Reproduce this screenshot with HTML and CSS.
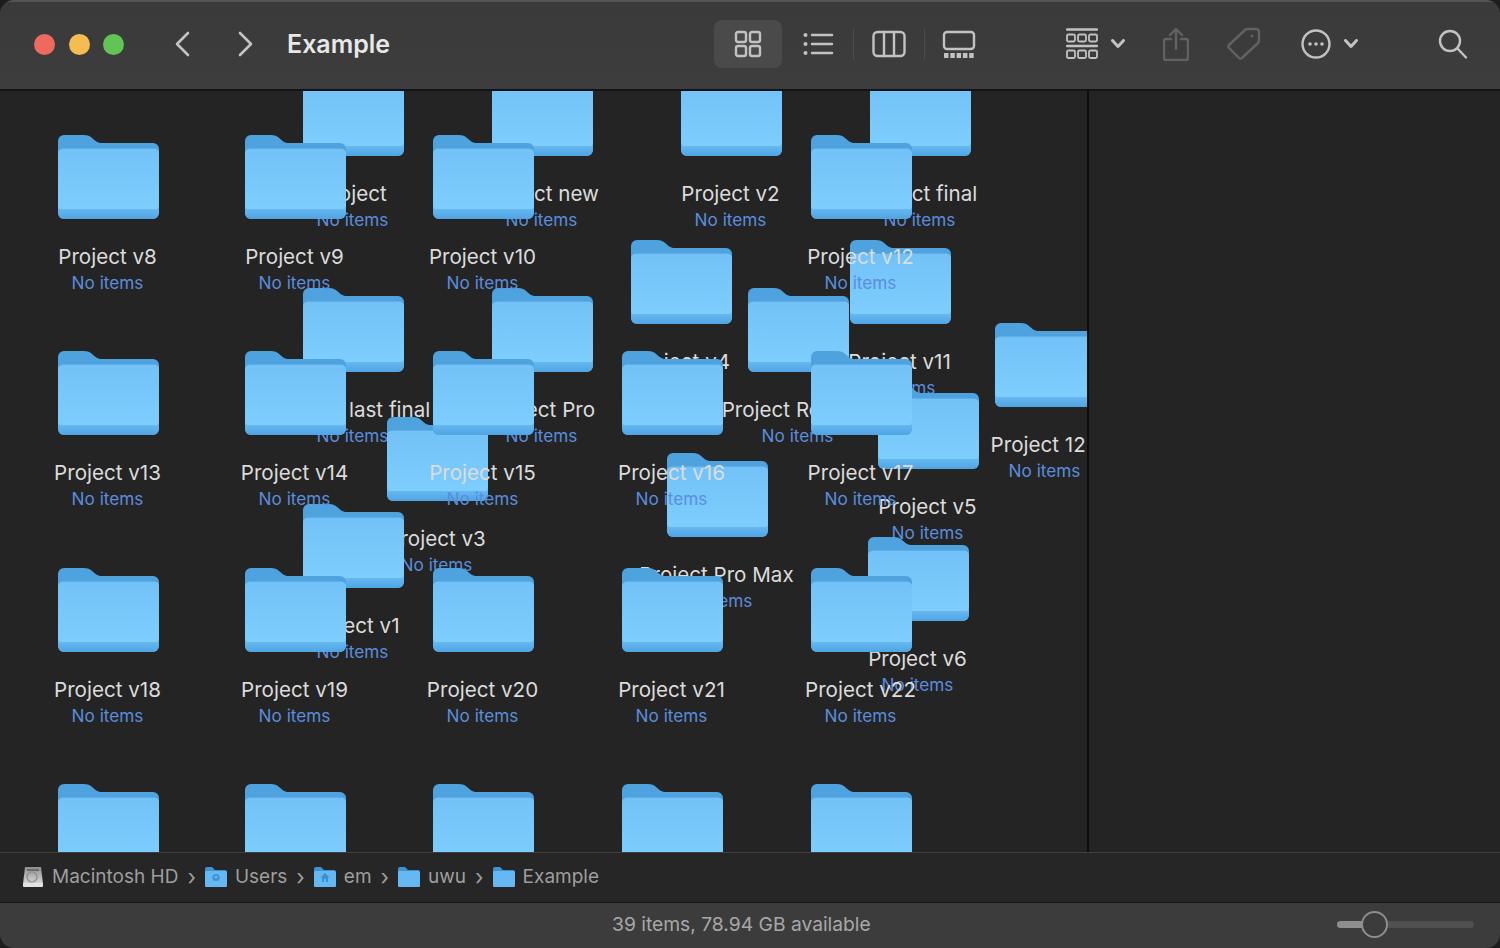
FILE: index.html
```html
<!DOCTYPE html>
<html lang="en">
<head>
    <meta charset="UTF-8">
    <meta name="viewport" content="width=device-width, initial-scale=1.0">
    <title>Example</title>
    <link rel="stylesheet" href="styles.css">
</head>
<body>
    <svg class="defs" width="0" height="0">
        <defs>
            <linearGradient id="folder-front" x1="0" y1="0" x2="0" y2="1">
                <stop offset="0" stop-color="#72c2f8"/>
                <stop offset="1" stop-color="#7dcdfd"/>
            </linearGradient>
            <linearGradient id="folder-band" x1="0" y1="0" x2="0" y2="1">
                <stop offset="0.800" stop-color="#70bff6"/>
                <stop offset="0.900" stop-color="#5fb2ec"/>
                <stop offset="1" stop-color="#4fa4e2"/>
            </linearGradient>
        </defs>
        <symbol id="folder" viewBox="0 0 102 85" preserveAspectRatio="none">
            <path fill="#4ea2de" d="M0 6a6 6 0 0 1 6-6h20c4 0 6 1 9 3.500l3 2.500c2 1.500 4 2 6 2h52a6 6 0 0 1 6 6v64a7 7 0 0 1-7 7H6a6 6 0 0 1-6-6z"/>
            <path fill="url(#folder-band)" d="M0 19a5 5 0 0 1 5-5h92a5 5 0 0 1 5 5v60a6 6 0 0 1-6 6H6a6 6 0 0 1-6-6z"/>
            <path fill="url(#folder-front)" d="M0 19a5 5 0 0 1 5-5h92a5 5 0 0 1 5 5v52a4 4 0 0 1-4 4H4a4 4 0 0 1-4-4z"/>
        </symbol>
        <symbol id="crumb" viewBox="0 0 22 20">
            <path fill="#3f93d2" d="M0 2a2 2 0 0 1 2-2h5l3 3h10a2 2 0 0 1 2 2v13a2 2 0 0 1-2 2H2a2 2 0 0 1-2-2z"/>
            <rect fill="#66b8f2" y="4" width="22" height="16" rx="1.500"/>
        </symbol>
    </svg>

    <div class="window">
        <header class="toolbar">
            <div class="lights">
                <span class="light red"></span>
                <span class="light yellow"></span>
                <span class="light green"></span>
            </div>
            <svg class="nav back" width="16" height="26" viewBox="0 0 16 26"><path d="M14 2 3 13l11 11"/></svg>
            <svg class="nav forward" width="16" height="26" viewBox="0 0 16 26"><path d="m2 2 11 11L2 24"/></svg>
            <div class="title">Example</div>

            <div class="view-active">
                <svg class="icon" width="28" height="28" viewBox="0 0 28 28">
                    <rect x="2" y="2" width="10" height="10" rx="2"/><rect x="16" y="2" width="10" height="10" rx="2"/>
                    <rect x="2" y="16" width="10" height="10" rx="2"/><rect x="16" y="16" width="10" height="10" rx="2"/>
                </svg>
            </div>
            <svg class="icon list-icon" width="32" height="26" viewBox="0 0 32 26">
                <path d="M9 4h20M9 13h20M9 22h20"/>
                <circle class="solid" cx="2.500" cy="4" r="2"/><circle class="solid" cx="2.500" cy="13" r="2"/><circle class="solid" cx="2.500" cy="22" r="2"/>
            </svg>
            <span class="sep sep-a"></span>
            <svg class="icon columns-icon" width="34" height="28" viewBox="0 0 34 28">
                <rect x="1.500" y="2" width="31" height="24" rx="4"/><path d="M12 2v24M22 2v24"/>
            </svg>
            <span class="sep sep-b"></span>
            <svg class="icon gallery-icon" width="34" height="28" viewBox="0 0 34 28">
                <rect x="2" y="2" width="30" height="17" rx="3"/>
                <path class="dashes" d="M2 25.500h30"/>
            </svg>

            <svg class="icon group-icon" width="32" height="32" viewBox="0 0 32 32">
                <path d="M1 1.500h30M1 18h30"/>
                <rect class="thin" x="1" y="6.500" width="8" height="7" rx="1.500"/><rect class="thin" x="12" y="6.500" width="8" height="7" rx="1.500"/><rect class="thin" x="23" y="6.500" width="8" height="7" rx="1.500"/>
                <rect class="thin" x="1" y="22.500" width="8" height="7.500" rx="1.500"/><rect class="thin" x="12" y="22.500" width="8" height="7.500" rx="1.500"/><rect class="thin" x="23" y="22.500" width="8" height="7.500" rx="1.500"/>
            </svg>
            <svg class="icon caret caret-a" width="14" height="10" viewBox="0 0 14 10"><path d="m1.500 1.500 5.500 6 5.500-6"/></svg>
            <svg class="icon dim share-icon" width="26" height="34" viewBox="0 0 26 34">
                <path d="M8 12H3a2 2 0 0 0-2 2v17a2 2 0 0 0 2 2h20a2 2 0 0 0 2-2V14a2 2 0 0 0-2-2h-5M13 22V2M7 8l6-6 6 6"/>
            </svg>
            <svg class="icon dim tag-icon" width="34" height="34" viewBox="0 0 34 34">
                <path d="M21 2h8a3 3 0 0 1 3 3v8a4 4 0 0 1-1 3L15 31a2 2 0 0 1-3 0L2 21a2 2 0 0 1 0-3L18 3a4 4 0 0 1 3-1z"/>
                <circle class="solid" cx="25" cy="9" r="1.500"/>
            </svg>
            <svg class="icon more-icon" width="30" height="30" viewBox="0 0 30 30">
                <circle cx="15" cy="15" r="13.500"/>
                <circle class="solid" cx="9" cy="15" r="1.800"/><circle class="solid" cx="15" cy="15" r="1.800"/><circle class="solid" cx="21" cy="15" r="1.800"/>
            </svg>
            <svg class="icon caret caret-b" width="14" height="10" viewBox="0 0 14 10"><path d="m1.500 1.500 5.500 6 5.500-6"/></svg>
            <svg class="icon search-icon" width="30" height="30" viewBox="0 0 30 30">
                <circle cx="12" cy="12" r="10"/><path d="m19.500 19.500 8.500 9"/>
            </svg>
        </header>

        <main class="main">
            <section class="canvas">
                <div class="item loose" style="left:259px;top:-19px"><svg class="folder"><use href="#folder"/></svg><div class="name">Project</div><div class="sub">No items</div></div>
                <div class="item loose" style="left:448px;top:-19px"><svg class="folder"><use href="#folder"/></svg><div class="name">Project new</div><div class="sub">No items</div></div>
                <div class="item loose" style="left:637px;top:-19px"><svg class="folder"><use href="#folder"/></svg><div class="name">Project v2</div><div class="sub">No items</div></div>
                <div class="item loose" style="left:826px;top:-19px"><svg class="folder"><use href="#folder"/></svg><div class="name">Project final</div><div class="sub">No items</div></div>
                <div class="item loose" style="left:587px;top:149px"><svg class="folder"><use href="#folder"/></svg><div class="name">Project v4</div><div class="sub">No items</div></div>
                <div class="item loose" style="left:806px;top:149px"><svg class="folder"><use href="#folder"/></svg><div class="name">Project v11</div><div class="sub">No items</div></div>
                <div class="item loose" style="left:259px;top:197px"><svg class="folder"><use href="#folder"/></svg><div class="name">Project last final</div><div class="sub">No items</div></div>
                <div class="item loose" style="left:448px;top:197px"><svg class="folder"><use href="#folder"/></svg><div class="name">Project Pro</div><div class="sub">No items</div></div>
                <div class="item loose" style="left:704px;top:197px"><svg class="folder"><use href="#folder"/></svg><div class="name">Project Remake</div><div class="sub">No items</div></div>
                <div class="item loose" style="left:951px;top:232px"><svg class="folder"><use href="#folder"/></svg><div class="name">Project 123</div><div class="sub">No items</div></div>
                <div class="item loose" style="left:834px;top:294px"><svg class="folder"><use href="#folder"/></svg><div class="name">Project v5</div><div class="sub">No items</div></div>
                <div class="item loose" style="left:343px;top:326px"><svg class="folder"><use href="#folder"/></svg><div class="name">Project v3</div><div class="sub">No items</div></div>
                <div class="item loose" style="left:623px;top:362px"><svg class="folder"><use href="#folder"/></svg><div class="name">Project Pro Max</div><div class="sub">No items</div></div>
                <div class="item loose" style="left:259px;top:413px"><svg class="folder"><use href="#folder"/></svg><div class="name">Project v1</div><div class="sub">No items</div></div>
                <div class="item loose" style="left:824px;top:446px"><svg class="folder"><use href="#folder"/></svg><div class="name">Project v6</div><div class="sub">No items</div></div>

                <div class="grid">
                    <div class="item"><svg class="folder"><use href="#folder"/></svg><div class="name">Project v8</div><div class="sub">No items</div></div>
                    <div class="item"><svg class="folder"><use href="#folder"/></svg><div class="name">Project v9</div><div class="sub">No items</div></div>
                    <div class="item"><svg class="folder"><use href="#folder"/></svg><div class="name">Project v10</div><div class="sub">No items</div></div>
                    <div class="item"></div>
                    <div class="item"><svg class="folder"><use href="#folder"/></svg><div class="name">Project v12</div><div class="sub">No items</div></div>
                    <div class="item"><svg class="folder"><use href="#folder"/></svg><div class="name">Project v13</div><div class="sub">No items</div></div>
                    <div class="item"><svg class="folder"><use href="#folder"/></svg><div class="name">Project v14</div><div class="sub">No items</div></div>
                    <div class="item"><svg class="folder"><use href="#folder"/></svg><div class="name">Project v15</div><div class="sub">No items</div></div>
                    <div class="item"><svg class="folder"><use href="#folder"/></svg><div class="name">Project v16</div><div class="sub">No items</div></div>
                    <div class="item"><svg class="folder"><use href="#folder"/></svg><div class="name">Project v17</div><div class="sub">No items</div></div>
                    <div class="item"><svg class="folder"><use href="#folder"/></svg><div class="name">Project v18</div><div class="sub">No items</div></div>
                    <div class="item"><svg class="folder"><use href="#folder"/></svg><div class="name">Project v19</div><div class="sub">No items</div></div>
                    <div class="item"><svg class="folder"><use href="#folder"/></svg><div class="name">Project v20</div><div class="sub">No items</div></div>
                    <div class="item"><svg class="folder"><use href="#folder"/></svg><div class="name">Project v21</div><div class="sub">No items</div></div>
                    <div class="item"><svg class="folder"><use href="#folder"/></svg><div class="name">Project v22</div><div class="sub">No items</div></div>
                    <div class="item"><svg class="folder"><use href="#folder"/></svg></div>
                    <div class="item"><svg class="folder"><use href="#folder"/></svg></div>
                    <div class="item"><svg class="folder"><use href="#folder"/></svg></div>
                    <div class="item"><svg class="folder"><use href="#folder"/></svg></div>
                    <div class="item"><svg class="folder"><use href="#folder"/></svg></div>
                </div>
            </section>
            <aside class="preview"></aside>
        </main>

        <nav class="pathbar">
            <svg class="hd" width="22" height="22" viewBox="0 0 22 22">
                <defs>
                    <linearGradient id="hd-body" x1="0" y1="0" x2="0" y2="1">
                        <stop offset="0" stop-color="#8f8f8f"/>
                        <stop offset="1" stop-color="#d8d8d8"/>
                    </linearGradient>
                </defs>
                <path fill="url(#hd-body)" d="M3 1h16l2 17H1z"/>
                <rect fill="#e2e2e2" x="1" y="17" width="20" height="4" rx="1"/>
                <path fill="#6b6b6b" d="M5 3h12v2H5z"/>
                <circle cx="10" cy="11" r="5" fill="none" stroke="#8c8c8c" stroke-width="1.200"/>
            </svg>
            <span class="crumb">Macintosh HD</span><span class="chev">›</span>
            <svg class="crumb-icon" viewBox="0 0 22 20">
                <use href="#crumb" width="22" height="20"/>
                <circle class="emblem" cx="11" cy="10.500" r="3.500"/>
                <circle class="emblem-dot" cx="11" cy="10" r="1.500"/>
            </svg>
            <span class="crumb">Users</span><span class="chev">›</span>
            <svg class="crumb-icon" viewBox="0 0 22 20">
                <use href="#crumb" width="22" height="20"/>
                <path class="emblem" d="M11 6 6.500 10.500H8V15h2v-3h2v3h2v-4.500h1.500z"/>
            </svg>
            <span class="crumb">em</span><span class="chev">›</span>
            <svg class="crumb-icon"><use href="#crumb"/></svg>
            <span class="crumb">uwu</span><span class="chev">›</span>
            <svg class="crumb-icon"><use href="#crumb"/></svg>
            <span class="crumb">Example</span>
        </nav>

        <footer class="statusbar">
            <div class="status-text">39 items, 78.94 GB available</div>
            <div class="slider">
                <span class="slider-fill"></span>
                <span class="slider-knob"></span>
            </div>
        </footer>
    </div>
</body>
</html>
```
FILE: styles.css
```css
* {
    box-sizing: border-box;
}

html, body {
    margin: 0;
    height: 100%;
    background-color: #1c1c1c;
}

body {
    font-family: Inter, "Noto Sans", sans-serif;
    overflow: hidden;
}

.defs {
    position: absolute;
}

.window {
    display: flex;
    flex-direction: column;
    height: 948px;
    border-radius: 14px;
    overflow: hidden;
    background-color: #242424;
}

/* toolbar */
.toolbar {
    display: flex;
    align-items: center;
    flex: none;
    height: 91px;
    padding: 0 0 3px 34px;
    background: linear-gradient(#3a3a3a, #3d3d3d);
    border-top: 2px solid #555;
    border-bottom: 2px solid #141414;
}

.lights {
    display: flex;
    gap: 13.500px;
}

.light {
    width: 21px;
    height: 21px;
    border-radius: 50%;
}

.red { background-color: #ee6a5f; }
.yellow { background-color: #f5bd4f; }
.green { background-color: #61c454; }

.nav path {
    fill: none;
    stroke: #c4c4c4;
    stroke-width: 2.6;
    stroke-linecap: round;
    stroke-linejoin: round;
}

.back { margin-left: 50px; }
.forward { margin-left: 48px; }

.title {
    margin-left: 33px;
    width: 427px;
    font-size: 25px;
    font-weight: 600;
    color: #e8e8e8;
}

.icon {
    flex: none;
    fill: none;
    stroke: #c2c2c2;
    stroke-width: 2.4;
    stroke-linecap: round;
    stroke-linejoin: round;
}

.icon .solid {
    fill: #c2c2c2;
    stroke: none;
}

.icon .thin {
    stroke-width: 1.8;
}

.icon .dashes {
    stroke-width: 5;
    stroke-dasharray: 4.500 1.800;
    stroke-linecap: butt;
}

.dim {
    stroke: #626262;
}

.icon.dim .solid {
    fill: #626262;
}

.caret {
    stroke-width: 3;
}

.view-active {
    display: flex;
    align-items: center;
    justify-content: center;
    width: 68px;
    height: 48px;
    border-radius: 8px;
    background-color: #4a4a4a;
}

.sep {
    flex: none;
    width: 1px;
    height: 32px;
    background-color: #4c4c4c;
}

.list-icon { margin-left: 21px; }
.sep-a { margin-left: 18px; }
.columns-icon { margin-left: 18px; }
.sep-b { margin-left: 18px; }
.gallery-icon { margin-left: 17px; }
.group-icon { margin-left: 90px; }
.caret-a { margin-left: 13px; }
.share-icon { margin-left: 38px; }
.tag-icon { margin-left: 38px; }
.more-icon { margin-left: 40px; }
.caret-b { margin-left: 13px; }
.search-icon { margin-left: 80px; }

/* icon view */
.main {
    display: flex;
    flex: 1;
    min-height: 0;
}

.canvas {
    position: relative;
    flex: none;
    width: 1087px;
    height: 100%;
    overflow: hidden;
}

.preview {
    flex: 1;
    border-left: 2px solid #0d0d0d;
}

/* the arranged icons sit over the ones dragged around */
.grid {
    position: relative;
    display: grid;
    grid-template-columns: 187px 188px 189px 189px 189px;
    grid-auto-rows: 216.34px;
    padding: 44px 0 0 14px;
}

.item {
    display: flex;
    flex-direction: column;
    align-items: center;
    width: 187px;
    text-align: center;
}

.loose {
    position: absolute;
}

.folder {
    flex: none;
    width: 101px;
    height: 84px;
    margin: 0 0 25px 1px;
}

.name, .sub {
    height: 26px;
    line-height: 26px;
    white-space: nowrap;
}

.name {
    font-size: 20.600px;
    color: #dcdcdc;
}

.sub {
    font-size: 17.200px;
    color: #5b8ddd;
}

/* path bar */
.pathbar {
    display: flex;
    align-items: center;
    flex: none;
    height: 50px;
    padding: 0 0 2px 22px;
    background-color: #262626;
    border-top: 1px solid #3e3e3e;
    font-size: 19px;
    color: #9e9e9e;
}

.crumb {
    margin-left: 8px;
}

.chev {
    width: 26.500px;
    text-align: center;
    font-size: 22px;
}

.crumb-icon {
    flex: none;
    width: 22px;
    height: 20px;
}

.emblem {
    fill: #3f8fd0;
}

.emblem-dot {
    fill: #66b8f2;
}

.hd {
    flex: none;
}

/* status bar */
.statusbar {
    display: flex;
    align-items: center;
    flex: none;
    height: 46px;
    padding: 0 0 2px 612px;
    background-color: #3c3c3c;
    border-top: 1px solid #151515;
    font-size: 19.250px;
    color: #a8a8a8;
}

.status-text {
    margin-top: -2px;
}

.slider {
    position: relative;
    width: 137px;
    height: 7px;
    margin-left: auto;
    margin-right: 26px;
    border-radius: 4px;
    background-color: #505050;
}

.slider-fill {
    display: block;
    width: 30px;
    height: 7px;
    border-radius: 4px;
    background-color: #8e8e8e;
}

.slider-knob {
    position: absolute;
    left: 24px;
    top: -10px;
    width: 27px;
    height: 27px;
    border: 2px solid #8e8e8e;
    border-radius: 50%;
    background-color: #3c3c3c;
}
```
